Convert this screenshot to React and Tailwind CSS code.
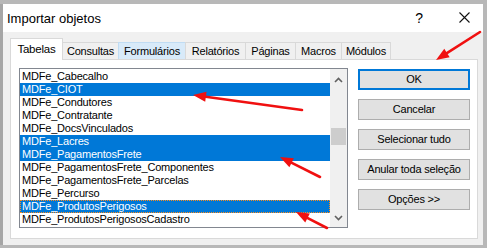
import React from "react";

const items = [
  ["MDFe_Cabecalho", false],
  ["MDFe_CIOT", true],
  ["MDFe_Condutores", false],
  ["MDFe_Contratante", false],
  ["MDFe_DocsVinculados", false],
  ["MDFe_Lacres", true],
  ["MDFe_PagamentosFrete", true],
  ["MDFe_PagamentosFrete_Componentes", false],
  ["MDFe_PagamentosFrete_Parcelas", false],
  ["MDFe_Percurso", false],
  ["MDFe_ProdutosPerigosos", true, true],
  ["MDFe_ProdutosPerigososCadastro", false],
];

const tabs = [
  ["Consultas", "w-[57px]", false],
  ["Formulários", "w-[68px]", true],
  ["Relatórios", "w-[61px]", false],
  ["Páginas", "w-[51px]", false],
  ["Macros", "w-[47px]", false],
  ["Módulos", "w-[50px]", false],
];

function Arrow({ x1, y1, x2, y2 }) {
  const dx = x2 - x1;
  const dy = y2 - y1;
  const len = Math.hypot(dx, dy);
  const ux = dx / len;
  const uy = dy / len;
  const hl = 13;
  const hw = 5;
  const bx = x2 - ux * hl;
  const by = y2 - uy * hl;
  const px = -uy;
  const py = ux;
  const pts = `${x2},${y2} ${bx + px * hw},${by + py * hw} ${bx - px * hw},${by - py * hw}`;
  return (
    <g>
      <line x1={x1} y1={y1} x2={bx + ux * 2} y2={by + uy * 2} stroke="#f01010" strokeWidth="2.6" strokeLinecap="round" />
      <polygon points={pts} fill="#f01010" />
    </g>
  );
}

export default function App() {
  const font = { fontFamily: '"Liberation Sans", Arial, sans-serif' };
  return (
    <div className="relative w-[487px] h-[248px] overflow-hidden bg-[#b8b8b8] text-black" style={font}>
      <div className="mt-[4px] w-[483px] h-[241px] border-l-[3px] border-[#a6a6a6] bg-[#f0f0f0] flex flex-col">
        {/* title bar */}
        <div className="h-[28px] bg-white flex items-center pl-[4px] pr-[13px] shrink-0">
          <span className="text-[13px] leading-none">Importar objetos</span>
          <span className="ml-auto text-[14px] leading-none mr-[36px]">?</span>
          <svg width="11" height="11" viewBox="0 0 11 11" className="mb-[1px]">
            <path d="M0.5 0.5 L10.5 10.5 M10.5 0.5 L0.5 10.5" stroke="#111" strokeWidth="1.1" fill="none" />
          </svg>
        </div>
        {/* body */}
        <div className="flex-1 pl-[7px] pt-[6px] text-[11px] tracking-[-0.2px]">
          <div className="flex items-end h-[21px]">
            <div className="relative z-10 w-[53px] h-[22px] -mb-[1px] bg-white border border-b-0 border-[#d9d9d9] flex items-start justify-center pt-[4px] leading-[12px] text-[11.5px]">
              Tabelas
            </div>
            {tabs.map(([t, w, hover]) => (
              <div
                key={t}
                className={`${w} h-[17px] -ml-[1px] border border-b-0 flex items-center justify-center leading-[12px] ${
                  hover ? "bg-[#d8eaf9] border-[#c0dcf3]" : "bg-[#f0f0f0] border-[#d9d9d9]"
                }`}
              >
                {t}
              </div>
            ))}
          </div>
          <div className="w-[468px] h-[180px] bg-white border border-[#d9d9d9] pl-[8px] pt-[8px] flex">
            {/* listbox */}
            <div className="w-[329px] h-[160px] border border-[#828790] flex bg-white">
              <div className="flex-1 pt-[1px] flex flex-col">
                {items.map(([t, sel, focus]) => (
                  <div
                    key={t}
                    className={`h-[13px] leading-[13px] pl-[2px] whitespace-nowrap ${
                      sel ? "bg-[#0078d7] text-white" : ""
                    } ${focus ? "outline outline-1 outline-dotted outline-[#ff8c1a] -outline-offset-1" : ""}`}
                  >
                    {t}
                  </div>
                ))}
              </div>
              <div className="w-[17px] bg-[#f0f0f0] flex flex-col items-center">
                <svg width="9" height="6" viewBox="0 0 9 6" className="mt-[8px]">
                  <path d="M1 5 L4.5 1.5 L8 5" stroke="#606060" strokeWidth="1.6" fill="none" />
                </svg>
                <div className="w-[15px] h-[17px] bg-[#cdcdcd] mt-[45px]"></div>
                <svg width="9" height="6" viewBox="0 0 9 6" className="mt-auto mb-[6px]">
                  <path d="M1 1 L4.5 4.5 L8 1" stroke="#606060" strokeWidth="1.6" fill="none" />
                </svg>
              </div>
            </div>
            {/* buttons */}
            <div className="ml-[10px] mt-[1px] flex flex-col gap-[9px]">
              <div className="w-[112px] h-[21px] bg-[#e1e1e1] border-2 border-[#0078d7] flex items-center justify-center">OK</div>
              <div className="w-[112px] h-[21px] bg-[#e1e1e1] border border-[#adadad] flex items-center justify-center">Cancelar</div>
              <div className="w-[112px] h-[21px] bg-[#e1e1e1] border border-[#adadad] flex items-center justify-center">Selecionar tudo</div>
              <div className="w-[112px] h-[21px] bg-[#e1e1e1] border border-[#adadad] flex items-center justify-center">Anular toda seleção</div>
              <div className="w-[112px] h-[21px] bg-[#e1e1e1] border border-[#adadad] flex items-center justify-center">Opções &gt;&gt;</div>
            </div>
          </div>
        </div>
      </div>
      <svg className="absolute inset-0 pointer-events-none" width="487" height="248">
        <Arrow x1={302} y1={110} x2={193} y2={95} />
        <Arrow x1={480} y1={32} x2={436} y2={60} />
        <Arrow x1={320} y1={177} x2={280} y2={157} />
        <Arrow x1={327} y1={228} x2={296} y2={212} />
      </svg>
    </div>
  );
}
